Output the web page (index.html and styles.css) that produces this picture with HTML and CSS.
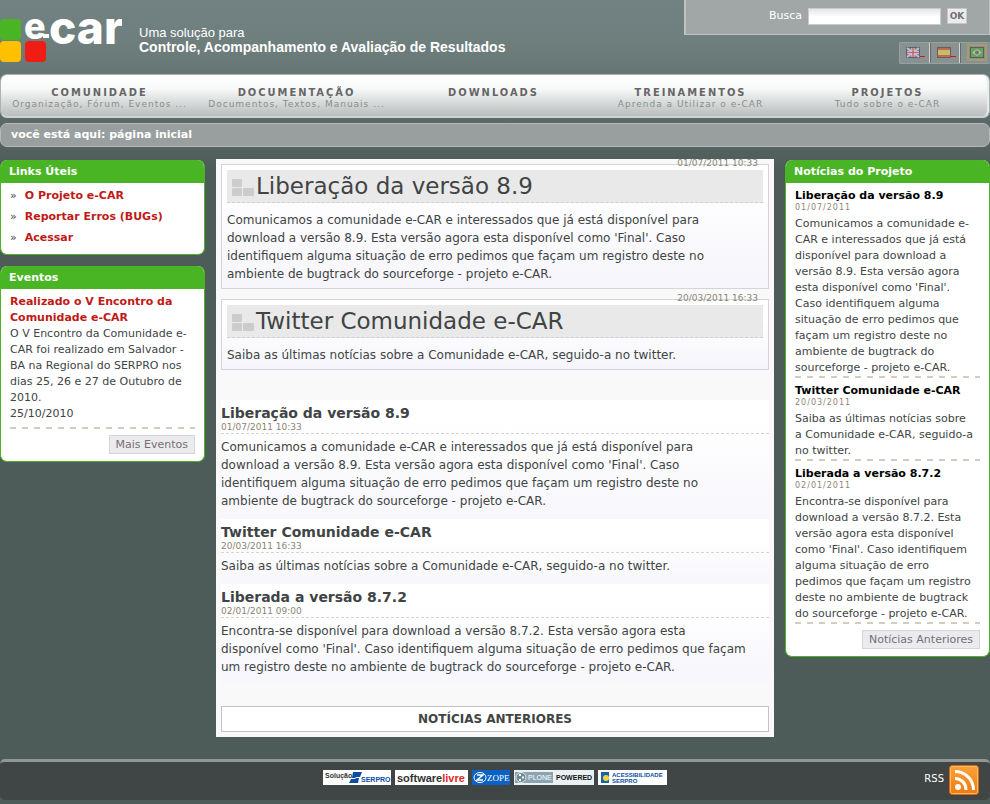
FILE: index.html
```html
<!DOCTYPE html>
<html lang="pt-BR">
<head>
<meta charset="utf-8">
<title>e-CAR</title>
<link rel="stylesheet" href="styles.css">
</head>
<body>
<header class="top">
  <a class="brand" href="#" aria-label="e-car">
    <svg class="logo" width="122" height="62" viewBox="0 0 122 62">
      <rect x="0" y="19" width="21" height="21" rx="4" fill="#49b524"/>
      <rect x="0" y="41" width="21" height="21" rx="4" fill="#ffc000"/>
      <rect x="25" y="41" width="21" height="21" rx="4" fill="#f01d14"/>
      <text x="24" y="39" class="logo-e">e</text>
      <rect x="43" y="34" width="6" height="4" fill="#fff"/>
      <text x="49" y="44" class="logo-car">car</text>
    </svg>
    <span class="slogan">Uma solução para<strong>Controle, Acompanhamento e Avaliação de Resultados</strong></span>
  </a>
  <div class="tools">
    <form class="search">
      <label for="q">Busca</label>
      <input id="q" type="text">
      <button type="button">OK</button>
    </form>
    <div class="langs">
      <a href="#" aria-label="English"><svg width="14" height="11" viewBox="0 0 14 11"><rect width="14" height="11" fill="#5c6080"/><rect x="1" y="1" width="12" height="9" fill="#7780a8"/><path d="M1 1l12 9M13 1L1 10" stroke="#c5bcc4" stroke-width="2"/><path d="M7 1v9M1 5.500h12" stroke="#ddd" stroke-width="3"/><path d="M7 1v9M1 5.500h12" stroke="#c2635f" stroke-width="1.500"/></svg><i></i></a>
      <a href="#" aria-label="Español"><svg width="14" height="11" viewBox="0 0 14 11"><rect width="14" height="11" fill="#6d5c58"/><rect x="1" y="1" width="12" height="9" fill="#bd6862"/><rect x="1" y="3" width="12" height="5" fill="#c6bd60"/></svg><i></i></a>
      <a href="#" aria-label="Português"><svg width="20" height="17" viewBox="0 0 20 17"><rect x="1" y="1" width="18" height="15" fill="#8a8f83" stroke="#ab9a6b" stroke-width="2"/><rect x="3" y="3" width="14" height="11" fill="#4c6664"/><rect x="4" y="4" width="12" height="9" fill="#65a06b"/><path d="M10 5l5 3.500-5 3.500-5-3.500z" fill="#c0bf69"/><circle cx="10" cy="8.500" r="2" fill="#5e75a0"/></svg></a>
    </div>
  </div>
</header>

<nav class="menu">
  <a href="#"><b>COMUNIDADE</b><span>Organização, Fórum, Eventos ...</span></a>
  <a href="#"><b>DOCUMENTAÇÃO</b><span>Documentos, Textos, Manuais ...</span></a>
  <a href="#"><b>DOWNLOADS</b></a>
  <a href="#"><b>TREINAMENTOS</b><span>Aprenda a Utilizar o e-CAR</span></a>
  <a href="#"><b>PROJETOS</b><span>Tudo sobre o e-CAR</span></a>
</nav>
<div class="crumbs">você está aqui: página inicial</div>

<div class="columns">
  <aside class="side">
    <section class="panel">
      <h2>Links Úteis</h2>
      <ul class="links">
        <li><a href="#">O Projeto e-CAR</a></li>
        <li><a href="#">Reportar Erros (BUGs)</a></li>
        <li><a href="#">Acessar</a></li>
      </ul>
    </section>
    <section class="panel">
      <h2>Eventos</h2>
      <div class="events">
        <a href="#">Realizado o V Encontro da Comunidade e-CAR</a>
        <p>O V Encontro da Comunidade e-CAR foi realizado em Salvador - BA na Regional do SERPRO nos dias 25, 26 e 27 de Outubro de 2010.</p>
        <p>25/10/2010</p>
        <div class="dash"></div>
        <a class="more" href="#">Mais Eventos</a>
      </div>
    </section>
  </aside>

  <main class="content">
    <article class="feature">
      <time>01/07/2011 10:33</time>
      <h1><svg width="22" height="18" viewBox="0 0 22 18"><g fill="#ccc"><rect width="10" height="8" rx="1"/><rect y="9" width="10" height="8" rx="1"/><rect x="11" y="9" width="11" height="8" rx="1"/></g></svg>Liberação da versão 8.9</h1>
      <p>Comunicamos a comunidade e-CAR e interessados que já está disponível para download a versão 8.9. Esta versão agora esta disponível como 'Final'. Caso identifiquem alguma situação de erro pedimos que façam um registro deste no ambiente de bugtrack do sourceforge - projeto e-CAR.</p>
    </article>
    <article class="feature">
      <time>20/03/2011 16:33</time>
      <h1><svg width="22" height="18" viewBox="0 0 22 18"><g fill="#ccc"><rect width="10" height="8" rx="1"/><rect y="9" width="10" height="8" rx="1"/><rect x="11" y="9" width="11" height="8" rx="1"/></g></svg>Twitter Comunidade e-CAR</h1>
      <p>Saiba as últimas notícias sobre a Comunidade e-CAR, seguido-a no twitter.</p>
    </article>
    <div class="list">
      <article>
        <h2>Liberação da versão 8.9</h2>
        <time>01/07/2011 10:33</time>
        <p>Comunicamos a comunidade e-CAR e interessados que já está disponível para download a versão 8.9. Esta versão agora esta disponível como 'Final'. Caso identifiquem alguma situação de erro pedimos que façam um registro deste no ambiente de bugtrack do sourceforge - projeto e-CAR.</p>
      </article>
      <article>
        <h2>Twitter Comunidade e-CAR</h2>
        <time>20/03/2011 16:33</time>
        <p>Saiba as últimas notícias sobre a Comunidade e-CAR, seguido-a no twitter.</p>
      </article>
      <article>
        <h2>Liberada a versão 8.7.2</h2>
        <time>02/01/2011 09:00</time>
        <p>Encontra-se disponível para download a versão 8.7.2. Esta versão agora esta disponível como 'Final'. Caso identifiquem alguma situação de erro pedimos que façam um registro deste no ambiente de bugtrack do sourceforge - projeto e-CAR.</p>
      </article>
    </div>
    <a class="older" href="#">NOTÍCIAS ANTERIORES</a>
  </main>

  <aside class="side">
    <section class="panel">
      <h2>Notícias do Projeto</h2>
      <div class="news">
        <h3>Liberação da versão 8.9</h3>
        <time>01/07/2011</time>
        <p>Comunicamos a comunidade e-CAR e interessados que já está disponível para download a versão 8.9. Esta versão agora esta disponível como 'Final'. Caso identifiquem alguma situação de erro pedimos que façam um registro deste no ambiente de bugtrack do sourceforge - projeto e-CAR.</p>
        <div class="dash"></div>
        <h3>Twitter Comunidade e-CAR</h3>
        <time>20/03/2011</time>
        <p>Saiba as últimas notícias sobre a Comunidade e-CAR, seguido-a no twitter.</p>
        <div class="dash"></div>
        <h3>Liberada a versão 8.7.2</h3>
        <time>02/01/2011</time>
        <p>Encontra-se disponível para download a versão 8.7.2. Esta versão agora esta disponível como 'Final'. Caso identifiquem alguma situação de erro pedimos que façam um registro deste no ambiente de bugtrack do sourceforge - projeto e-CAR.</p>
        <div class="dash"></div>
        <a class="more" href="#">Notícias Anteriores</a>
      </div>
    </section>
  </aside>
</div>

<footer class="footer">
  <div class="badges">
    <a href="#"><svg width="68" height="15" viewBox="0 0 68 15"><rect width="68" height="15" fill="#fff"/><text x="2" y="8" font-size="7" font-weight="700" fill="#333">Solução</text><path d="M30 2h9l-2 5h-4l-1 1h4l-1 5h-9l2-4h4l1-1h-4z" fill="#0b4da2"/><text x="38" y="12" font-size="7" font-weight="700" fill="#0b4da2">SERPRO</text></svg></a>
    <a href="#"><svg width="73" height="15" viewBox="0 0 73 15"><rect width="73" height="15" fill="#fff"/><text x="2" y="12" font-size="11" font-weight="700" fill="#333">software<tspan fill="#e02a2f">livre</tspan></text></svg></a>
    <a href="#"><svg width="38" height="15" viewBox="0 0 38 15"><rect width="38" height="15" fill="#0a62c4"/><ellipse cx="8" cy="7.500" rx="6" ry="5" fill="none" stroke="#fff"/><path d="M5 5h6l-6 5h6" fill="none" stroke="#fff" stroke-width="1.500"/><text x="15" y="11" class="serif" font-size="9" fill="#fff">ZOPE</text></svg></a>
    <a href="#"><svg width="80" height="15" viewBox="0 0 80 15"><rect width="80" height="15" fill="#e9f1f4"/><rect x="1" y="2" width="38" height="11" fill="#8ba5b0"/><circle cx="7" cy="7.500" r="5" fill="#6e8b97" stroke="#dfe9ed"/><path d="M5 4h2v2H5zM8 6.500h2v2H8zM5 9h2v2H5z" fill="#fff"/><text x="14" y="10" font-size="7" fill="#fff">PLONE</text><text x="42" y="10" font-size="7" font-weight="700" fill="#111">POWERED</text></svg></a>
    <a href="#"><svg width="69" height="15" viewBox="0 0 69 15"><rect width="69" height="15" fill="#fff"/><rect x="3" y="2" width="8" height="11" fill="#1863ae"/><circle cx="8" cy="8" r="3" fill="#f2d438"/><text x="14" y="7" font-size="6" font-weight="700" fill="#0b4da2">ACESSIBILIDADE</text><text x="14" y="13" font-size="6" font-weight="700" fill="#0b4da2">SERPRO</text></svg></a>
  </div>
  <a class="rss" href="#">RSS
    <svg width="30" height="30" viewBox="0 0 30 30"><defs><linearGradient id="o" x2="0" y2="1"><stop stop-color="#fba33c"/><stop offset="1" stop-color="#ee7a10"/></linearGradient></defs><rect x=".5" y=".5" width="29" height="29" rx="3" fill="url(#o)" stroke="#d8680b"/><rect x="1.500" y="1.500" width="27" height="27" rx="2" fill="none" stroke="#fcb968"/><circle cx="9" cy="22" r="3" fill="#fff"/><path d="M6 13.500a11 11 0 0 1 11 11.500M6 6.500a18.500 18.500 0 0 1 18.500 18.500" fill="none" stroke="#fff" stroke-width="3"/></svg>
  </a>
</footer>
</body>
</html>
```
FILE: styles.css
```css
* { box-sizing: border-box; }
body {
  margin: 0;
  min-height: 804px;
  font: 11px/16px "DejaVu Sans", sans-serif;
  color: #404444;
  background: #4e5c59 linear-gradient(#728282, #6f7f7e 40px, #4e5c59 170px) no-repeat;
}
a { color: inherit; text-decoration: none; }
h1, h2, h3, p, ul { margin: 0; padding: 0; }
svg { display: block; }
ul { list-style: none; }

.top { display: flex; justify-content: space-between; height: 74px; }
.brand { display: flex; gap: 17px; color: #fff; }
.logo-e, .logo-car { font-family: Inter, sans-serif; font-weight: 800; fill: #fff; }
.logo-e { font-size: 36px; }
.logo-car { font-size: 46px; }
.slogan { padding-top: 26px; font: 13px/14px "Liberation Sans", sans-serif; }
.slogan strong { display: block; font-size: 14px; }
.tools { display: flex; flex-direction: column; align-items: flex-end; gap: 7px; }
.search {
  display: flex; align-items: flex-start; justify-content: flex-end; gap: 6px;
  width: 306px; height: 35px; padding: 8px 22px 0 0;
  background: #a1a7a6; border: solid #bcc3c2; border-width: 0 1px 1px 2px;
}
.search label { color: #fff; line-height: 15px; }
.search input {
  width: 133px; height: 17px; padding: 0 2px; border: 1px solid #c9cccc;
  background: linear-gradient(#e6e6e6, #fff 8px);
}
.search button {
  width: 20px; height: 16px; padding: 0; border: 1px solid #c4c6ca;
  background: #ebebef; color: #766f6f; font: bold 9px/12px "DejaVu Sans", sans-serif;
}
.langs { display: flex; height: 22px; background: #879291; border-radius: 2px; border: 1px solid #95a09f; border-right: 0; }
.langs a { display: flex; width: 30px; padding: 4px 0 0 6px; border-right: 1px solid #d2d6d6; }
.langs a + a { border-left: 1px solid #606b6a; }
.langs a:last-child { padding-top: 1px; border-right: 0; }
.langs i { width: 5px; height: 1px; margin-top: 9px; background: #d11; }

.menu {
  display: grid; grid-template-columns: repeat(5, 1fr); height: 44px; padding-right: 3px;
  border: 1px solid #aab5b4; border-bottom: 2px solid #cdd3d3; border-radius: 7px;
  background: linear-gradient(#fff, #f7f8f8 14px, #babdbd);
  box-shadow: inset -3px 0 1px -1px #e8eded;
}
.menu a { padding-top: 12px; text-align: center; }
.menu b { display: block; font: bold 11px/12px "DejaVu Sans Condensed", "DejaVu Sans", sans-serif; letter-spacing: 2px; color: #666; }
.menu span { display: block; font-size: 9px; line-height: 10px; letter-spacing: 1px; color: #84908d; }
.crumbs {
  margin: 5px 0 12px; padding: 3px 10px; border: 1px solid #b3bbba; border-radius: 7px;
  background: #999f9e; color: #fff; font-weight: bold;
}

.columns { display: grid; grid-template-columns: 205px 1fr 205px; gap: 11px; align-items: start; }
.side { padding-top: 1px; display: grid; gap: 11px; }
.panel { border: 1px solid #49b524; border-top: 0; border-radius: 7px; background: #fff; overflow: hidden; }
.panel h2 { padding: 4px 8px 3px; background: #49b524; color: #fff; font-size: 11px; line-height: 16px; }
.links { padding: 2px 9px 6px; }
.links li { line-height: 21px; display: flex; gap: 8px; }
.links li::before { content: "»"; }
.links a, .events > a:first-child { font-weight: bold; color: #c01a17; }
.events { padding: 5px 9px 7px; }
.events .dash { margin-top: 5px; }
.dash { height: 2px; margin: 0 0 5px; background: repeating-linear-gradient(90deg, #d3cdc0 0 6px, transparent 6px 12px); }
.more {
  display: block; width: fit-content; margin: 6px 0 0 auto; padding: 1px 6px;
  line-height: 15px; border: 1px solid #d5d5d8; background: #ebebef; color: #766f6f;
}
.news { padding: 5px 9px 7px; }
.news p { padding-right: 5px; }
.news h3 { font-size: 11px; line-height: 15px; color: #000; }
.news time { display: block; margin-bottom: 3px; font-size: 8px; line-height: 10px; letter-spacing: 1px; color: #8c8576; }

.content { padding: 5px; background: #f9f9f9; font-size: 12px; line-height: 18px; }
.feature {
  position: relative; margin-bottom: 10px; padding: 5px;
  border: 1px solid #d5d5d7; background: linear-gradient(#fff 20px, #f5f5fb);
}
.feature time { position: absolute; top: -8px; right: 10px; font-size: 9px; line-height: 12px; color: #8c8576; }
.feature h1 {
  display: flex; gap: 2px; margin-bottom: 8px; padding-left: 5px;
  font-size: 23px; font-weight: normal; line-height: 32px;
  background: #e9e9e9; border-bottom: 1px dashed #d0d0d2;
}
.feature h1 svg { margin-top: 9px; }
.feature p, .list p { padding-right: 20px; }
.list { margin-top: 30px; }
.list article { padding: 4px 0 9px; background: linear-gradient(#fff 20px, #f7f7fc); }
.list article:last-child { background: linear-gradient(#fff 20px, #f7f7fc 90px); }
.list h2 { font-size: 14px; line-height: 18px; }
.list time {
  display: block; margin-bottom: 4px; padding-bottom: 1px; font-size: 9px; line-height: 10px;
  color: #8c8576; border-bottom: 1px dashed #d5d5d7;
}
.older {
  display: block; margin-top: 21px; padding: 3px 0; text-align: center;
  font-weight: bold; background: #fff; border: 1px solid #c2c2c4;
}

.footer {
  display: grid; grid-template-columns: 1fr auto 1fr; margin-top: 22px; height: 41px;
  background: #404645; border-top: 3px solid #919796; border-radius: 5px;
}
.badges { grid-column: 2; display: flex; gap: 4px; padding-top: 8px; }
.badges text { font-family: "Liberation Sans", sans-serif; }
.badges .serif { font-family: "Liberation Serif", serif; }
.rss { display: flex; justify-content: flex-end; gap: 5px; padding: 3px 11px 0 0; color: #fff; font-size: 10px; line-height: 28px; }
```
